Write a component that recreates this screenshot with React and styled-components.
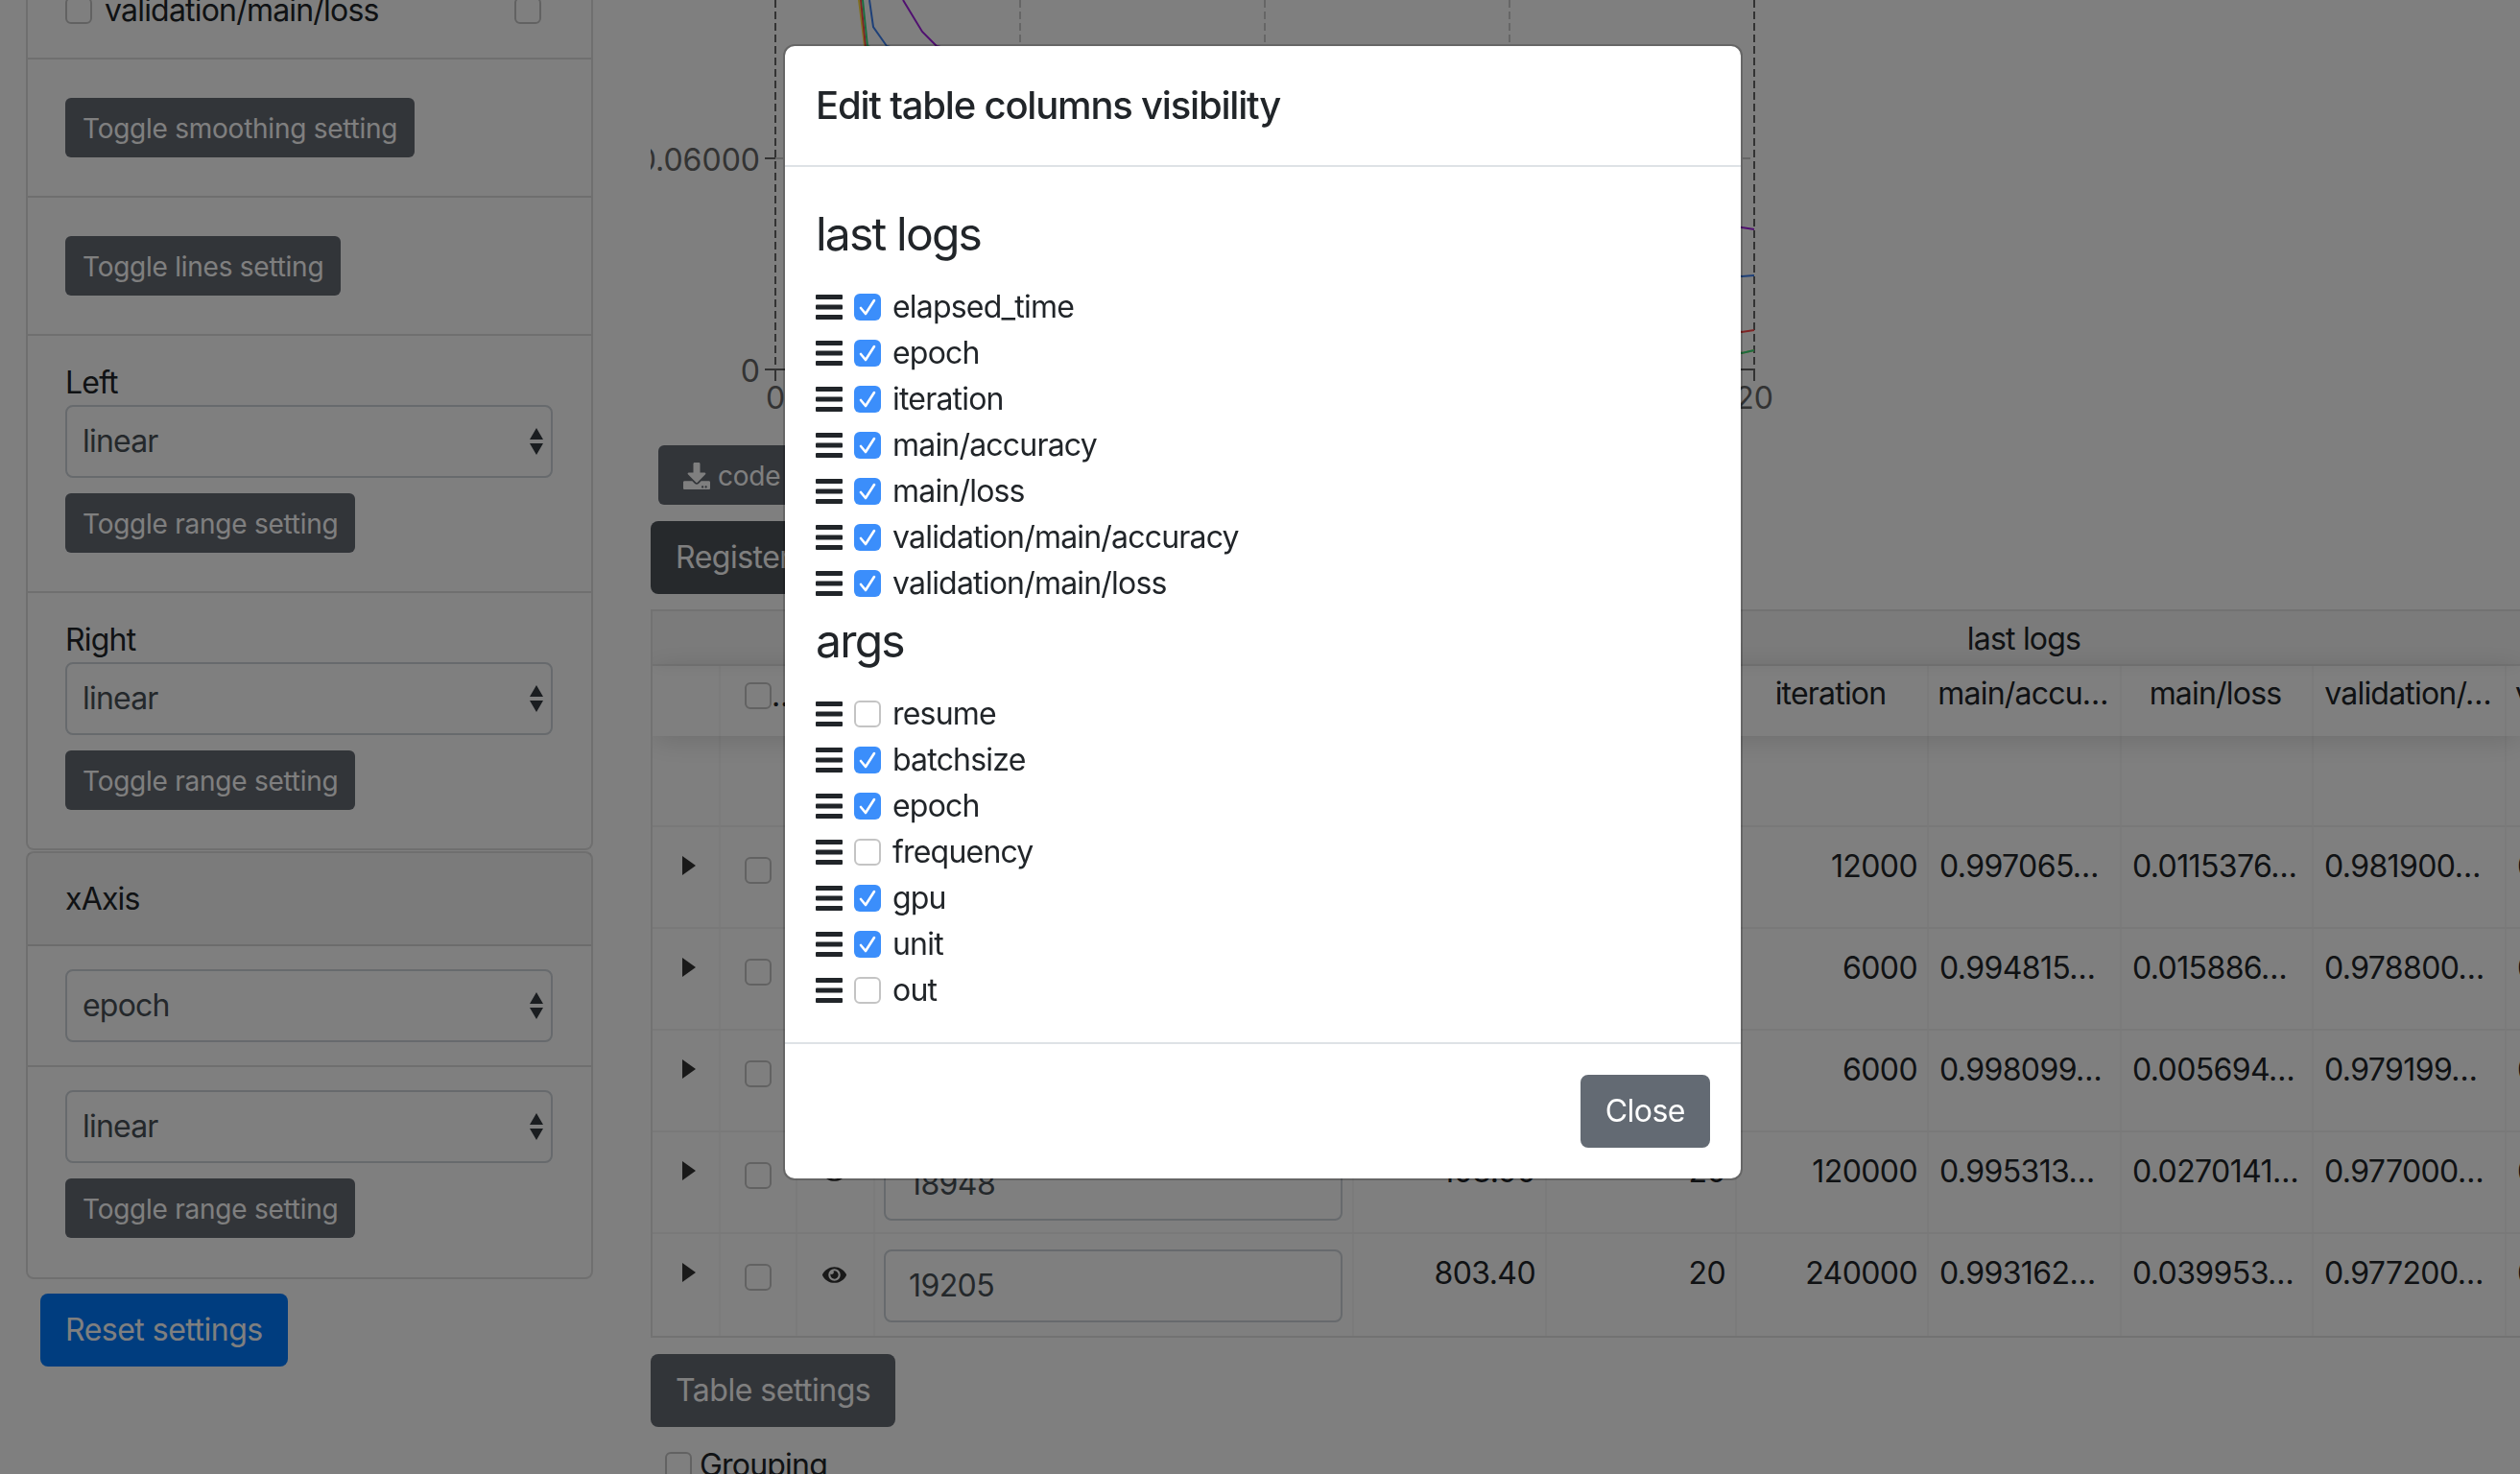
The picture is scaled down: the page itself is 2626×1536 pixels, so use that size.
import React from 'react'
import styled, { createGlobalStyle } from 'styled-components'
import { FaDownload, FaEye } from 'react-icons/fa'

const GlobalStyle = createGlobalStyle`
  html, body {
    margin: 0;
    height: 100%;
    overflow: hidden;
    background: #fff;
  }
  body {
    font-family: Inter, "Liberation Sans", sans-serif;
    font-size: 32px;
    line-height: 48px;
    color: #212529;
    letter-spacing: -0.8px;
  }
  * { box-sizing: border-box; }
`

const Page = styled.div`
  display: flex;
  width: 2626px;
  height: 1536px;
  overflow: hidden;
`

const Sidebar = styled.aside`
  flex: none;
  width: 678px;
  padding-left: 27px;
`

const Card = styled.section`
  width: 591px;
  border: 2px solid rgba(0, 0, 0, 0.125);
  border-top-width: ${(props) => (props.$clipped ? 0 : 2)}px;
  border-radius: ${(props) => (props.$clipped ? '0 0 8px 8px' : '8px')};
  margin-top: ${(props) => (props.$clipped ? 0 : 1)}px;
`

const CardHeader = styled.div`
  height: 97px;
  padding: 24px 39px;
  background: rgba(0, 0, 0, 0.03);
  border-bottom: 2px solid rgba(0, 0, 0, 0.125);
`

const Group = styled.div`
  padding: ${(props) => props.$top ?? 40}px 39px ${(props) => props.$bottom ?? 40}px;
  border-bottom: ${(props) => (props.$last ? 'none' : '2px solid rgba(0, 0, 0, 0.125)')};
`

const ClippedGroup = styled.div`
  display: flex;
  align-items: flex-end;
  height: 62px;
  padding: 0 39px 25px;
  border-bottom: 2px solid rgba(0, 0, 0, 0.125);
`

const MetricRow = styled.div`
  display: flex;
  align-items: center;
  width: 496px;
  height: 48px;
`

const MetricName = styled.span`
  flex: 1;
  margin-left: 13px;
`

const Box = styled.span`
  flex: none;
  display: block;
  width: 28px;
  height: 28px;
  background: #fff;
  border: 2px solid #c4c4c4;
  border-radius: 6px;
`

const Label = styled.div`
  height: 48px;
  padding-top: 1px;
`

const SelectBox = styled.div`
  display: flex;
  align-items: center;
  justify-content: space-between;
  width: 508px;
  height: 76px;
  padding: 0 7px 0 16px;
  background: #fff;
  color: #495057;
  border: 2px solid #ced4da;
  border-radius: 8px;
  margin-bottom: ${(props) => (props.$spaced ? 16 : 0)}px;
`

const DarkButton = styled.div`
  display: inline-flex;
  align-items: center;
  height: 62px;
  padding: 1px ${(props) => props.$pad ?? 18}px 0 ${(props) => props.$pad ?? 18}px;
  font-size: 28px;
  letter-spacing: -0.25px;
  color: #fff;
  background: #656a73;
  border-radius: 6px;
  vertical-align: top;
`

const BigButton = styled.div`
  display: inline-flex;
  align-items: center;
  height: 76px;
  padding: 0 26px;
  letter-spacing: -0.5px;
  color: #fff;
  background: ${(props) => props.$bg};
  border-radius: 8px;
`

const ResetWrap = styled.div`
  margin: 15px 0 0 15px;
`

const Main = styled.main`
  flex: 1;
  min-width: 0;
`

const ChartSvg = styled.svg`
  display: block;
  width: 1200px;
  height: 464px;
  font-family: Inter, "Liberation Sans", sans-serif;
  font-size: 32px;
  letter-spacing: 0;
`

const CodeRow = styled.div`
  height: 79px;
  padding-left: 8px;
`

const RegisterRow = styled.div`
  height: 92px;
`

const CodeIcon = styled(FaDownload)`
  margin-right: 8px;
  font-size: 28px;
`

const Table = styled.div`
  width: 1948px;
  height: 759px;
  border: 2px solid rgba(0, 0, 0, 0.1);
  border-right: none;
  overflow: hidden;
`

const GroupHeader = styled.div`
  display: flex;
  height: 57px;
  background: rgba(0, 0, 0, 0.03);
  border-bottom: 2px solid rgba(0, 0, 0, 0.05);
  box-shadow: 0 2px 15px rgba(0, 0, 0, 0.05);
`

const TableHeader = styled.div`
  position: relative;
  display: flex;
  height: 73px;
  box-shadow: 0 4px 30px rgba(0, 0, 0, 0.15);
`

const FilterRow = styled.div`
  display: flex;
  height: 95px;
  border-bottom: 2px solid rgba(0, 0, 0, 0.05);
`

const Row = styled.div`
  display: flex;
  height: 106px;
  border-bottom: ${(props) => (props.$last ? 'none' : '2px solid rgba(0, 0, 0, 0.05)')};
`

const Cell = styled.div`
  flex: none;
  width: ${(props) => props.$w}px;
  padding: 17px 10px 0 11px;
  letter-spacing: -0.6px;
  text-align: ${(props) => props.$align || 'left'};
  white-space: nowrap;
  overflow: hidden;
  border-right: 2px solid rgba(0, 0, 0, 0.03);
`

const HeadCell = styled(Cell)`
  padding: 5px 12px 0 9px;
  letter-spacing: -0.8px;
`

const ControlCell = styled(Cell)`
  display: flex;
  justify-content: center;
  padding: ${(props) => props.$top}px 0 0;
  overflow: visible;
`

const HeadControl = styled(ControlCell)`
  justify-content: flex-start;
  padding-left: 25px;
  line-height: 28px;
`

const Expander = styled.span`
  width: 0;
  height: 0;
  margin-left: 6px;
  border-left: 14px solid #333;
  border-top: 10px solid transparent;
  border-bottom: 10px solid transparent;
`

const EyeIcon = styled(FaEye)`
  margin-right: 2px;
  font-size: 25px;
  color: #333;
`

const NameInput = styled.div`
  width: 478px;
  height: 76px;
  margin: -1px 0 0 -2px;
  padding: 12px 24px;
  color: #495057;
  border: 2px solid #ced4da;
  border-radius: 8px;
`

const TableFooter = styled.div`
  margin-top: 17px;
`

const GroupingRow = styled.div`
  display: flex;
  align-items: center;
  height: 48px;
  margin: 16px 0 0 15px;
`

const GroupingText = styled.span`
  margin-left: 8px;
`

const Backdrop = styled.div`
  position: fixed;
  inset: 0;
  background: rgba(0, 0, 0, 0.5);
`

const Modal = styled.div`
  position: fixed;
  top: 46px;
  left: 816px;
  width: 1000px;
  background: #fff;
  background-clip: padding-box;
  border: 2px solid rgba(0, 0, 0, 0.2);
  border-radius: 12px;
`

const ModalHeader = styled.div`
  padding: 32px;
  border-bottom: 2px solid #dee2e6;
`

const ModalTitle = styled.div`
  font-size: 40px;
  line-height: 60px;
  font-weight: 500;
  letter-spacing: -1.2px;
`

const ModalBody = styled.div`
  padding: 34px 32px 30px;
`

const ColumnGroup = styled.div`
  padding-top: 7px;
`

const GroupTitle = styled.div`
  font-size: 48px;
  line-height: 58px;
  margin-bottom: 23px;
  letter-spacing: -1.8px;
`

const ColumnRow = styled.div`
  display: flex;
  align-items: center;
  height: 48px;
`

const HandleSvg = styled.svg`
  flex: none;
  display: block;
  margin-right: 12px;
`

const CheckBox = styled.span`
  flex: none;
  display: flex;
  align-items: center;
  justify-content: center;
  width: 28px;
  height: 28px;
  margin-right: 12px;
  border-radius: 6px;
  background: ${(props) => (props.$checked ? '#3b8efb' : '#fff')};
  border: ${(props) => (props.$checked ? 'none' : '2px solid #c4c4c4')};
`

const ModalFooter = styled.div`
  display: flex;
  justify-content: flex-end;
  padding: 32px;
  border-top: 2px solid #dee2e6;
`

const widths = [71, 80, 81, 499, 201, 198, 200, 201, 200, 201, 200]

const SelectArrows = () => (
  <svg width="16" height="30" viewBox="0 0 16 30">
    <path d="M8 1l7 12H1zM8 29L1 17h14z" fill="#343a40" />
  </svg>
)

const Handle = () => (
  <HandleSvg width="28" height="26" viewBox="0 0 28 26" fill="#212529">
    <rect y="0" width="28" height="5" rx="1" />
    <rect y="10.5" width="28" height="5" rx="1" />
    <rect y="21" width="28" height="5" rx="1" />
  </HandleSvg>
)

const Tick = () => (
  <svg width="20" height="18" viewBox="0 0 20 18">
    <path d="M3 10l5 6 9-14" fill="none" stroke="#fff" strokeWidth="2.6" strokeLinecap="round" strokeLinejoin="round" />
  </svg>
)

const lastLogs = [
  ['elapsed_time', true],
  ['epoch', true],
  ['iteration', true],
  ['main/accuracy', true],
  ['main/loss', true],
  ['validation/main/accuracy', true],
  ['validation/main/loss', true],
]

const args = [
  ['resume', false],
  ['batchsize', true],
  ['epoch', true],
  ['frequency', false],
  ['gpu', true],
  ['unit', true],
  ['out', false],
]

const rows = [
  { iter: '12000', acc: '0.997065…', loss: '0.0115376…', val: '0.981900…' },
  { iter: '6000', acc: '0.994815…', loss: '0.015886…', val: '0.978800…' },
  { iter: '6000', acc: '0.998099…', loss: '0.005694…', val: '0.979199…' },
  { name: '18948', time: '103.90', epoch: '20', iter: '120000', acc: '0.995313…', loss: '0.0270141…', val: '0.977000…' },
  { name: '19205', time: '803.40', epoch: '20', iter: '240000', acc: '0.993162…', loss: '0.039953…', val: '0.977200…' },
]

const Chart = () => (
  <ChartSvg viewBox="678 0 1200 464">
    <g stroke="#ccc" strokeWidth="2" strokeDasharray="8 4" fill="none">
      <path d="M1063 0V385M1318 0V385M1573 0V385M808 165H1828" />
    </g>
    <g stroke="#666" strokeWidth="2" fill="none">
      <path d="M808 0V385M1828 0V385" strokeDasharray="8 4" />
      <path d="M797 165H808M797 385H1828M808 385V397M1828 385V397" />
    </g>
    <g fill="none" strokeWidth="2">
      <path d="M895 0L901 48L1815 368L1828 365" stroke="#ffe040" />
      <path d="M897 0L902 48L1815 346L1828 344" stroke="#ff4848" />
      <path d="M899 0L904 48L1815 368L1828 365" stroke="#38d880" />
      <path d="M906 0L910 28L924 48L1815 288L1828 287" stroke="#3c80f0" />
      <path d="M941 0L961 33L976 48L1815 237L1828 239" stroke="#a020e0" />
    </g>
    <g fill="#666">
      <text x="792" y="178" textAnchor="end">0.06000</text>
      <text x="792" y="398" textAnchor="end">0</text>
      <text x="808" y="426" textAnchor="middle">0</text>
      <text x="1828" y="426" textAnchor="middle">20</text>
    </g>
  </ChartSvg>
)

const App = () => (
  <>
    <GlobalStyle />
    <Page>
      <Sidebar>
        <Card $clipped>
          <ClippedGroup>
            <MetricRow>
              <Box />
              <MetricName>validation/main/loss</MetricName>
              <Box />
            </MetricRow>
          </ClippedGroup>
          <Group>
            <DarkButton>Toggle smoothing setting</DarkButton>
          </Group>
          <Group>
            <DarkButton>Toggle lines setting</DarkButton>
          </Group>
          <Group $top={24}>
            <Label>Left</Label>
            <SelectBox $spaced>linear<SelectArrows /></SelectBox>
            <DarkButton>Toggle range setting</DarkButton>
          </Group>
          <Group $top={24} $last>
            <Label>Right</Label>
            <SelectBox $spaced>linear<SelectArrows /></SelectBox>
            <DarkButton>Toggle range setting</DarkButton>
          </Group>
        </Card>
        <Card>
          <CardHeader>xAxis</CardHeader>
          <Group $top={24} $bottom={24}>
            <SelectBox>epoch<SelectArrows /></SelectBox>
          </Group>
          <Group $top={24} $bottom={41} $last>
            <SelectBox $spaced>linear<SelectArrows /></SelectBox>
            <DarkButton>Toggle range setting</DarkButton>
          </Group>
        </Card>
        <ResetWrap>
          <BigButton $bg="#007bff">Reset settings</BigButton>
        </ResetWrap>
      </Sidebar>
      <Main>
        <Chart />
        <CodeRow>
          <DarkButton $pad={26}><CodeIcon />code</DarkButton>
        </CodeRow>
        <RegisterRow>
          <BigButton $bg="#4d5258">Register</BigButton>
        </RegisterRow>
        <Table>
          <GroupHeader>
            <HeadCell $w={731} />
            <HeadCell $w={1401} $align="center">last logs</HeadCell>
          </GroupHeader>
          <TableHeader>
            <Cell $w={widths[0]} />
            <HeadControl $w={widths[1]} $top={17}><Box />…</HeadControl>
            <Cell $w={widths[2]} />
            <Cell $w={widths[3]} />
            <Cell $w={widths[4]} />
            <Cell $w={widths[5]} />
            <HeadCell $w={widths[6]} $align="center">iteration</HeadCell>
            <HeadCell $w={widths[7]} $align="center">main/accu…</HeadCell>
            <HeadCell $w={widths[8]} $align="center">main/loss</HeadCell>
            <HeadCell $w={widths[9]} $align="center">validation/…</HeadCell>
            <HeadCell $w={widths[10]}>v</HeadCell>
          </TableHeader>
          <FilterRow>
            {widths.map((w, i) => <Cell key={i} $w={w} />)}
          </FilterRow>
          {rows.map((row, i) => (
            <Row key={i} $last={i === rows.length - 1}>
              <ControlCell $w={widths[0]} $top={30}><Expander /></ControlCell>
              <ControlCell $w={widths[1]} $top={31}><Box /></ControlCell>
              <ControlCell $w={widths[2]} $top={30}>{row.name && <EyeIcon />}</ControlCell>
              <Cell $w={widths[3]}>{row.name && <NameInput>{row.name}</NameInput>}</Cell>
              <Cell $w={widths[4]} $align="right">{row.time}</Cell>
              <Cell $w={widths[5]} $align="right">{row.epoch}</Cell>
              <Cell $w={widths[6]} $align="right">{row.iter}</Cell>
              <Cell $w={widths[7]}>{row.acc}</Cell>
              <Cell $w={widths[8]}>{row.loss}</Cell>
              <Cell $w={widths[9]}>{row.val}</Cell>
              <Cell $w={widths[10]}>0</Cell>
            </Row>
          ))}
        </Table>
        <TableFooter>
          <BigButton $bg="#656a73">Table settings</BigButton>
        </TableFooter>
        <GroupingRow>
          <Box />
          <GroupingText>Grouping</GroupingText>
        </GroupingRow>
      </Main>
    </Page>
    <Backdrop />
    <Modal>
      <ModalHeader>
        <ModalTitle>Edit table columns visibility</ModalTitle>
      </ModalHeader>
      <ModalBody>
        {[['last logs', lastLogs], ['args', args]].map(([title, columns]) => (
          <ColumnGroup key={title}>
            <GroupTitle>{title}</GroupTitle>
            {columns.map(([name, checked]) => (
              <ColumnRow key={name}>
                <Handle />
                <CheckBox $checked={checked}>{checked && <Tick />}</CheckBox>
                {name}
              </ColumnRow>
            ))}
          </ColumnGroup>
        ))}
      </ModalBody>
      <ModalFooter>
        <BigButton $bg="#636a73">Close</BigButton>
      </ModalFooter>
    </Modal>
  </>
)

export default App
